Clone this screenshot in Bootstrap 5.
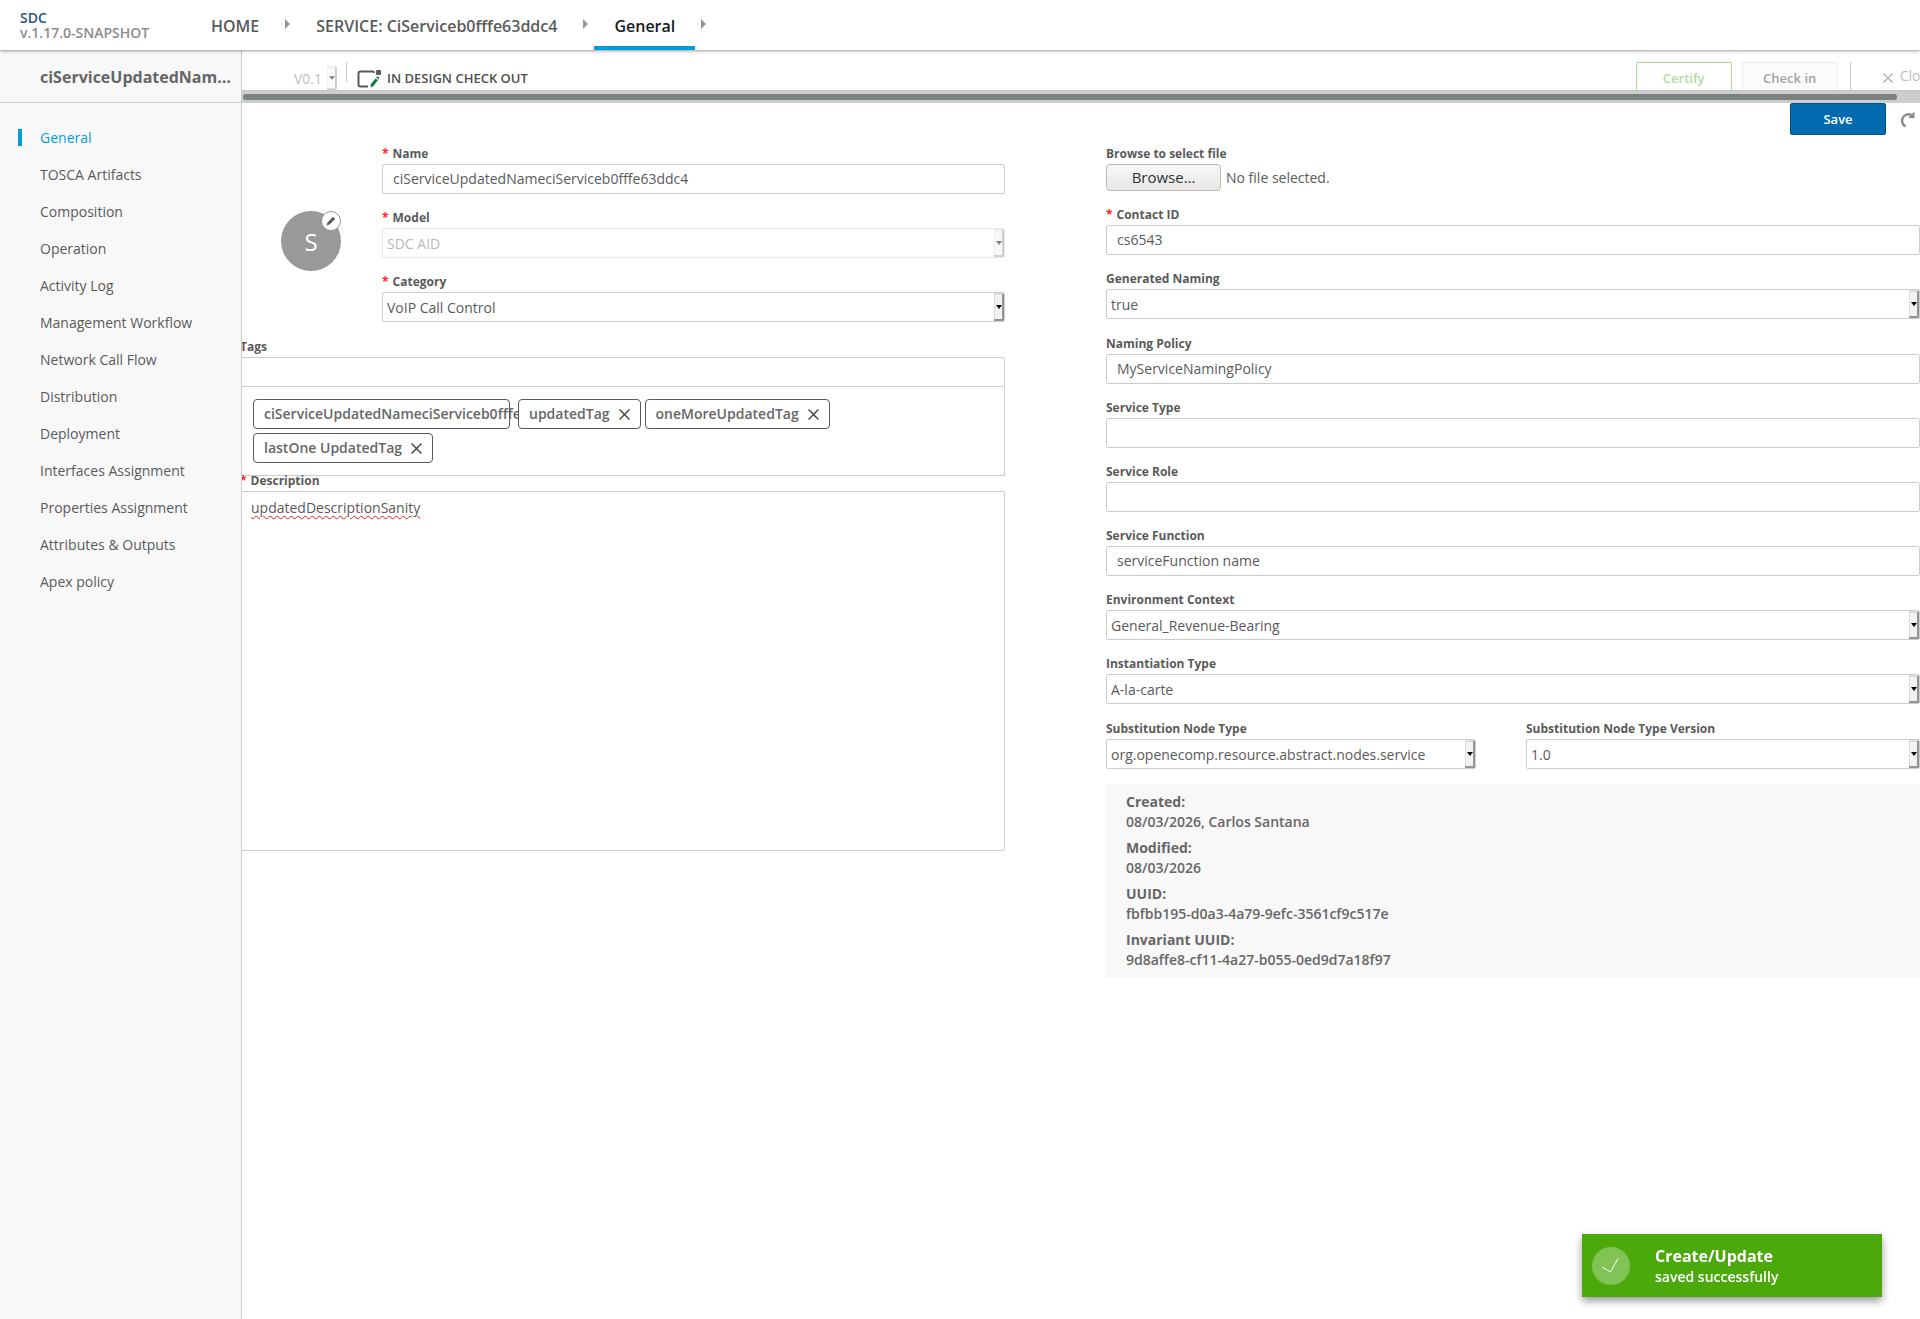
<!DOCTYPE html>
<html lang="en">
<head>
<meta charset="utf-8">
<meta name="viewport" content="width=device-width, initial-scale=1">
<title>SDC - General</title>
<link href="https://cdn.jsdelivr.net/npm/bootstrap@5.3.0/dist/css/bootstrap.min.css" rel="stylesheet">
<style>
  body { font-family: "Open Sans", sans-serif; font-size: 14px; line-height: 20px; color: #5a5a5a; background: #fff; }
  a { color: inherit; text-decoration: none; }
  button, input, select, textarea { font-family: inherit; }

  /* top bar */
  .top-bar { height: 50px; background: #fff; box-shadow: 0 1px 3px rgba(0,0,0,.4); z-index: 2; padding-left: 20px; }
  .brand-box { width: 171px; padding-top: 10px; font-weight: 600; line-height: 15px; color: #8c8c8c; }
  .brand-box a { color: #2b5582; }
  .crumb { font-size: 16px; font-weight: 600; padding: 0 20px; height: 50px; line-height: 52px; }
  .crumb.active { color: #191919; border-bottom: 4px solid #009fdb; }
  .crumb-arrow { width: 5px; height: 10px; margin: 19px 6px 0 6px; fill: #959595; align-self: flex-start; }

  /* side menu */
  .side-menu { width: 242px; background: #f8f8f8; border-right: 1px solid #cdcdcd; }
  .side-title { height: 53px; padding: 2px 8px 0 40px; font-size: 16px; line-height: 50px; font-weight: 700; color: #666; border-bottom: 1px solid #cdcdcd; }
  .side-list { padding-top: 16px; }
  .side-list a { height: 37px; line-height: 36px; padding-left: 18px; }
  .side-list a::before { content: ""; width: 4px; height: 17px; margin-right: 18px; }
  .side-list a.active { color: #009fdb; }
  .side-list a.active::before { background: #009fdb; }

  /* version and actions strip */
  .tool-strip { height: 40px; overflow: hidden; padding: 12px 0 0 49px; margin-right: -15px; }
  .tool-strip select.field { width: 46px; height: 24px; margin-top: 4px; border: 0; padding-left: 3px; color: #bdbdbd; background-color: transparent; }
  .rule-v { width: 1px; background: #cdcdcd; }
  .rule-short { height: 20px; margin: 0 10px 0 9px; }
  .rule-tall { margin: 0 22px 0 12px; }
  .state-text { font-size: 13px; font-weight: 600; line-height: 32px; margin-left: 5px; color: #4f4f4f; }
  .act-btn { width: 96px; height: 32px; border-radius: 2px; font-size: 13px; font-weight: 600; padding: 0; }
  .act-certify { color: #b0dd9a; background: #fff; border: 1px solid #a7d98d; margin-right: 10px; }
  .act-checkin { color: #a3a3a3; background: #fbfbfb; border: 1px solid #ececec; }
  .act-close { border: 0; background: none; padding: 0; margin-left: 10px; color: #bcbcbc; line-height: 28px; height: 28px; }
  .act-close svg { margin: 3px 7px 0 0; }
  .act-save { color: #fff; background: #046ab0; border: 1px solid #02528a; }
  .act-revert { border: 0; background: none; padding: 8px 5px 0 14px; }
  .scroll-track { height: 13px; background: #cdcdcd; padding: 3px 23px 4px 1px; border-top: 1px solid #c9c6bf; }
  .scroll-thumb { height: 6px; border-radius: 3px; background: #7c8280; }

  /* form */
  .form-cols { display: grid; grid-template-columns: 765fr 814fr; column-gap: 101px; margin: 10px 0 0 -2px; }
  .pair-cols { display: grid; grid-template-columns: 370fr 394fr; column-gap: 50px; }
  .field-label { display: block; font-size: 12px; font-weight: 700; line-height: 18px; margin-bottom: 1px; }
  .field-label.req::before { content: "*"; color: #f22; margin-right: 4px; font-weight: 700; }
  .field { display: block; width: 100%; height: 30px; border: 1px solid #cdcdcd; border-radius: 2px; padding: 0 10px 1px; color: #5a5a5a; background-color: #fff; outline: 0; }
  .field-group { margin-bottom: 15px; }
  select.field { appearance: none; padding: 2px 12px 0 4px; background-repeat: no-repeat; background-position: right top; background-size: 10px 100%;
    background-image: url("data:image/svg+xml,%3Csvg xmlns='http://www.w3.org/2000/svg' width='10' height='28' preserveAspectRatio='none' viewBox='0 0 10 28'%3E%3Cpath fill='%23dcdcdc' d='M0 0h10v28H0z'/%3E%3Cpath fill='%23f2f2f0' d='M1 2h7v24H1z'/%3E%3Cpath fill='%23949494' d='M8 1h2v27H0v-2h8z'/%3E%3Cpath d='M2 12h6l-3 4z'/%3E%3C/svg%3E"); }
  select.field:disabled, .tool-strip select.field { opacity: 1;
    background-image: url("data:image/svg+xml,%3Csvg xmlns='http://www.w3.org/2000/svg' width='10' height='28' preserveAspectRatio='none' viewBox='0 0 10 28'%3E%3Cpath fill='%23efefef' d='M0 0h10v28H0z'/%3E%3Cpath fill='%23f9f9f8' d='M1 2h7v24H1z'/%3E%3Cpath fill='%23cfcfcf' d='M8 1h2v27H0v-2h8z'/%3E%3Cpath fill='%23808080' d='M2 12h6l-3 4z'/%3E%3C/svg%3E"); }
  select.field:disabled { color: #b9b9b9; border-color: #e6e6e6; }
  .icon-side { width: 142px; padding: 66px 0 0 41px; }
  .avatar { width: 60px; height: 60px; border-radius: 50%; background: #999; color: #fff; font-size: 24px; line-height: 61px; }
  .avatar-edit { width: 20px; height: 20px; padding: 0; top: 0; right: 0; border: 1px solid #959595; border-radius: 50%; background: #fff; display: flex; }
  .tags-box { border: 1px solid #cdcdcd; border-top: 0; padding: 12px; gap: 4px; margin-bottom: -4px; }
  .tag-pill { height: 30px; border: 1px solid #5a5a5a; border-radius: 4px; background: #fff; padding: 0 10px; font-weight: 600; color: #666; gap: 9px; white-space: nowrap; }
  .tag-long { width: 257px; margin-right: 4px; }
  .tag-pill button { border: 0; background: none; padding: 0; display: flex; }
  .notes { height: 360px; padding: 6px 10px; resize: none; text-decoration: underline wavy #f01818 1px; text-underline-offset: 2px; }
  .file-row { margin-bottom: 15px; gap: 5px; height: 27px; }
  .browse-btn { width: 115px; height: 27px; border: 1px solid #bfb8b1; border-radius: 4px; background: linear-gradient(#f8f8f7, #e8e7e6); color: #2e3436; padding: 0 0 2px; font-size: 15px; line-height: 22px; }
  .info-box { background: #f8f8f8; padding: 8px 20px 8px; font-weight: 600; color: #666; margin: 0; }
  .info-box dt { font-weight: 700; }
  .info-box dd { margin-bottom: 6px; }

  /* toast */
  .note-toast { right: 38px; bottom: 22px; width: 300px; height: 63px; background: #4ca90c; color: #fff; font-weight: 600; box-shadow: 0 4px 8px rgba(0,0,0,.4); padding-left: 10px; gap: 25px; }
  .note-title { font-size: 16px; font-weight: 700; line-height: 21px; padding-top: 2px; }
</style>
</head>
<body class="d-flex flex-column min-vh-100">
<header class="top-bar d-flex position-relative">
  <div class="brand-box d-flex flex-column"><a href="#">SDC</a><span>v.1.17.0-SNAPSHOT</span></div>
  <nav class="d-flex" aria-label="Breadcrumb">
    <a class="crumb" href="#">HOME</a>
    <svg class="crumb-arrow" viewBox="0 0 5 10"><path d="M0 0l5 5-5 5z"/></svg>
    <a class="crumb" href="#">SERVICE: CiServiceb0fffe63ddc4</a>
    <svg class="crumb-arrow" viewBox="0 0 5 10"><path d="M0 0l5 5-5 5z"/></svg>
    <a class="crumb active" href="#">General</a>
    <svg class="crumb-arrow" viewBox="0 0 5 10"><path d="M0 0l5 5-5 5z"/></svg>
  </nav>
</header>

<div class="d-flex flex-grow-1">
  <aside class="side-menu flex-shrink-0">
    <div class="side-title text-truncate">ciServiceUpdatedNameciServiceb0fffe63ddc4</div>
    <nav class="side-list d-flex flex-column">
      <a class="active d-flex align-items-center" href="#">General</a>
      <a class="d-flex align-items-center" href="#">TOSCA Artifacts</a>
      <a class="d-flex align-items-center" href="#">Composition</a>
      <a class="d-flex align-items-center" href="#">Operation</a>
      <a class="d-flex align-items-center" href="#">Activity Log</a>
      <a class="d-flex align-items-center" href="#">Management Workflow</a>
      <a class="d-flex align-items-center" href="#">Network Call Flow</a>
      <a class="d-flex align-items-center" href="#">Distribution</a>
      <a class="d-flex align-items-center" href="#">Deployment</a>
      <a class="d-flex align-items-center" href="#">Interfaces Assignment</a>
      <a class="d-flex align-items-center" href="#">Properties Assignment</a>
      <a class="d-flex align-items-center" href="#">Attributes &amp; Outputs</a>
      <a class="d-flex align-items-center" href="#">Apex policy</a>
    </nav>
  </aside>

  <main class="flex-grow-1 overflow-hidden">
    <div class="tool-strip d-flex align-items-start">
      <select class="field flex-shrink-0" aria-label="Version"><option>V0.1</option></select>
      <span class="rule-v rule-short"></span>
      <svg class="mt-2" width="25" height="18" viewBox="0 0 25 18"><path d="M11 16.500H3.500Q1.500 16.500 1.500 14.500V3.500Q1.500 1.500 3.500 1.500H15.500Q17 1.500 17 3" fill="none" stroke="#5a5a5a" stroke-width="2"/><rect x="19" width="5" height="5" rx="1" fill="#5a5a5a"/><path d="M13.500 17.500l.5-3.500 4.500-5.500 2.500 1.500-4.500 6z" fill="#0a7f3f"/><path d="M19.200 7.500l1-1.200 2.300 1.500-1 1.400z" fill="#0a7f3f"/></svg>
      <span class="state-text">IN DESIGN CHECK OUT</span>
      <div class="d-flex ms-auto flex-shrink-0">
        <button class="act-btn act-certify" type="button">Certify</button>
        <button class="act-btn act-checkin" type="button">Check in</button>
        <span class="rule-v rule-tall"></span>
        <button class="act-close d-flex align-items-center" type="button"><svg width="10" height="10" viewBox="0 0 10 10"><path d="M.5.500l9 9M9.500.500l-9 9" stroke="#aaa" stroke-width="1.200"/></svg>Close</button>
      </div>
    </div>
    <div class="scroll-track"><div class="scroll-thumb"></div></div>

    <div class="d-flex justify-content-end">
      <button class="act-btn act-save" type="button">Save</button>
      <button class="act-revert d-flex" type="button" aria-label="Revert"><svg width="15" height="17" viewBox="0 0 15 17"><path d="M5.500 15.500A6.400 6.400 0 1 1 11.500 4" fill="none" stroke="#8a8a8a" stroke-width="2.400"/><path d="M14.500.500v6.500H8z" fill="#8a8a8a"/></svg></button>
    </div>

    <form class="form-cols">
      <div>
        <div class="d-flex">
          <div class="icon-side flex-shrink-0">
            <div class="avatar position-relative text-center">S
              <button class="avatar-edit position-absolute align-items-center justify-content-center" type="button" aria-label="Edit icon"><svg width="10" height="10" viewBox="0 0 10 10"><path d="M.5 9.500l1-3L7 .8 9.200 3 3.500 8.600z" fill="#5a5a5a"/></svg></button>
            </div>
          </div>
          <div class="flex-grow-1">
            <div class="field-group"><label class="field-label req" for="f-name">Name</label><input class="field" id="f-name" type="text" value="ciServiceUpdatedNameciServiceb0fffe63ddc4"></div>
            <div class="field-group"><label class="field-label req" for="f-model">Model</label><select class="field" id="f-model" disabled><option>SDC AID</option></select></div>
            <div class="field-group mb-3"><label class="field-label req" for="f-cat">Category</label><select class="field" id="f-cat"><option>VoIP Call Control</option></select></div>
          </div>
        </div>
        <label class="field-label" for="f-tags">Tags</label>
        <input class="field" id="f-tags" type="text">
        <div class="tags-box d-flex flex-wrap">
          <span class="tag-pill tag-long d-flex align-items-center">ciServiceUpdatedNameciServiceb0fffe63ddc4</span>
          <span class="tag-pill position-relative d-flex align-items-center">updatedTag<button type="button" aria-label="Remove updatedTag"><svg width="11" height="11" viewBox="0 0 10 10"><path d="M.5.500l9 9M9.500.500l-9 9" stroke="#444" stroke-width="1.300"/></svg></button></span>
          <span class="tag-pill d-flex align-items-center">oneMoreUpdatedTag<button type="button" aria-label="Remove oneMoreUpdatedTag"><svg width="11" height="11" viewBox="0 0 10 10"><path d="M.5.500l9 9M9.500.500l-9 9" stroke="#444" stroke-width="1.300"/></svg></button></span>
          <span class="tag-pill d-flex align-items-center">lastOne UpdatedTag<button type="button" aria-label="Remove lastOne UpdatedTag"><svg width="11" height="11" viewBox="0 0 10 10"><path d="M.5.500l9 9M9.500.500l-9 9" stroke="#444" stroke-width="1.300"/></svg></button></span>
        </div>
        <label class="field-label req" for="f-desc">Description</label>
        <textarea class="field notes" id="f-desc" spellcheck="false">updatedDescriptionSanity</textarea>
      </div>

      <div>
        <label class="field-label" for="f-file">Browse to select file</label>
        <div class="file-row d-flex align-items-center">
          <button class="browse-btn" type="button" onclick="document.getElementById('f-file').click()">Browse…</button>
          <span>No file selected.</span>
          <input class="d-none" id="f-file" type="file">
        </div>
        <div class="field-group"><label class="field-label req" for="f-contact">Contact ID</label><input class="field" id="f-contact" type="text" value="cs6543"></div>
        <div class="field-group mb-3"><label class="field-label" for="f-gen">Generated Naming</label><select class="field" id="f-gen"><option>true</option></select></div>
        <div class="field-group"><label class="field-label" for="f-pol">Naming Policy</label><input class="field" id="f-pol" type="text" value="MyServiceNamingPolicy"></div>
        <div class="field-group"><label class="field-label" for="f-type">Service Type</label><input class="field" id="f-type" type="text"></div>
        <div class="field-group"><label class="field-label" for="f-role">Service Role</label><input class="field" id="f-role" type="text"></div>
        <div class="field-group"><label class="field-label" for="f-func">Service Function</label><input class="field" id="f-func" type="text" value="serviceFunction name"></div>
        <div class="field-group"><label class="field-label" for="f-env">Environment Context</label><select class="field" id="f-env"><option>General_Revenue-Bearing</option></select></div>
        <div class="field-group mb-3"><label class="field-label" for="f-inst">Instantiation Type</label><select class="field" id="f-inst"><option>A-la-carte</option></select></div>
        <div class="pair-cols">
          <div class="field-group"><label class="field-label" for="f-sub">Substitution Node Type</label><select class="field" id="f-sub"><option>org.openecomp.resource.abstract.nodes.service</option></select></div>
          <div class="field-group"><label class="field-label" for="f-subv">Substitution Node Type Version</label><select class="field" id="f-subv"><option>1.0</option></select></div>
        </div>
        <dl class="info-box">
          <dt>Created:</dt><dd>08/03/2026, Carlos Santana</dd>
          <dt>Modified:</dt><dd>08/03/2026</dd>
          <dt>UUID:</dt><dd>fbfbb195-d0a3-4a79-9efc-3561cf9c517e</dd>
          <dt>Invariant UUID:</dt><dd class="mb-0">9d8affe8-cf11-4a27-b055-0ed9d7a18f97</dd>
        </dl>
      </div>
    </form>
  </main>
</div>

<div class="note-toast position-fixed d-flex align-items-center" role="status">
  <svg width="38" height="38" viewBox="0 0 38 38"><circle cx="19" cy="19" r="19" fill="#fff" fill-opacity=".3"/><path d="M10 20l8.500 5L26 11.500" fill="none" stroke="#fff"/></svg>
  <div><div class="note-title">Create/Update</div><div>saved successfully</div></div>
</div>
<script src="https://cdn.jsdelivr.net/npm/bootstrap@5.3.0/dist/js/bootstrap.bundle.min.js"></script>
</body>
</html>
